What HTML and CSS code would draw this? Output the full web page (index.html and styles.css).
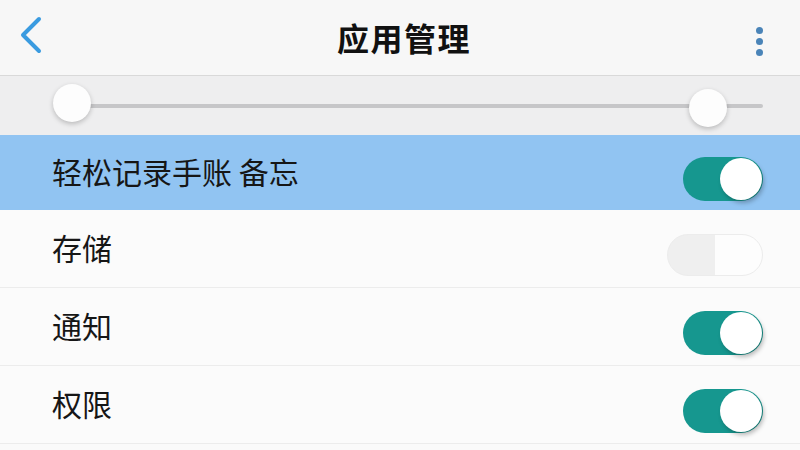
FILE: index.html
```html
<!DOCTYPE html>
<html lang="zh">
<head>
<meta charset="utf-8">
<link rel="stylesheet" href="styles.css">
</head>
<body>
<div class="app">
  <header class="topbar">
    <svg class="back" width="26" height="40" viewBox="0 0 26 40"><path d="M21 3 L5 19 L21 35" fill="none" stroke="#3a9be0" stroke-width="4" stroke-linecap="round" stroke-linejoin="round"/></svg>
    <h1 class="title">应用管理</h1>
    <div class="more"><span></span><span></span><span></span></div>
  </header>
  <div class="slider">
    <div class="track">
      <div class="thumb" style="left:0px"></div>
      <div class="thumb thumb-right" style="left:636px"></div>
    </div>
  </div>
  <ul class="list">
    <li class="row row-active"><span class="label">轻松记录手账 备忘</span><span class="toggle on"><span class="knob"></span></span></li>
    <li class="row"><span class="label">存储</span><span class="toggle off"></span></li>
    <li class="row"><span class="label">通知</span><span class="toggle on"><span class="knob"></span></span></li>
    <li class="row"><span class="label">权限</span><span class="toggle on"><span class="knob"></span></span></li>
  </ul>
</div>
</body>
</html>
```
FILE: styles.css
```css
* { box-sizing: border-box; margin: 0; padding: 0; }
html, body { width: 800px; height: 450px; overflow: hidden; background: #fafafa; }
body { font-family: "Noto Sans CJK SC", "Noto Sans", sans-serif; color: #1a1a1a; }
.app { display: flex; flex-direction: column; height: 450px; }
.topbar {
  height: 76px; display: flex; align-items: center;
  padding: 0 37px 0 18px; background: #f7f7f7; border-bottom: 1px solid #d9d9d9;
}
.back { display: block; margin-top: -3px; }
.title { flex: 1; text-align: center; font-size: 32px; font-weight: 700; letter-spacing: 1.5px; color: #111; margin-top: -2px; padding-left: 8px; }
.more { display: flex; flex-direction: column; gap: 4px; margin-top: 8px; }
.more span { width: 7px; height: 7px; border-radius: 50%; background: #4a84b8; }
.slider { height: 59px; background: #eeeeef; display: flex; align-items: center; padding: 0 37px 0 72px; }
.track { position: relative; flex: 1; height: 4px; background: #c6c6c8; border-radius: 2px; margin-top: 1px; }
.thumb {
  position: absolute; top: -20px; margin-left: -19px; width: 38px; height: 38px; border-radius: 50%;
  background: #fdfdfd; box-shadow: 0 2px 5px rgba(0,0,0,0.22);
}
.thumb-right { top: -15px; }
.list { list-style: none; flex: 1; }
.row {
  height: 78px; display: flex; align-items: center; justify-content: space-between;
  padding: 0 37px 0 52px; border-bottom: 1px solid #ececec; background: #fbfbfb;
}
.row-active { height: 75px; background: #91c4f2; border-bottom: none; }
.label { font-size: 30px; color: #161616; margin-top: -4px; }
.toggle { width: 80px; height: 44px; border-radius: 22px; display: flex; align-items: center; margin-top: 12px; }
.toggle.on { background: #16978f; justify-content: flex-end; padding-right: 1px; }
.knob { width: 42px; height: 42px; border-radius: 50%; background: #fff; box-shadow: 2px 3px 4px rgba(0,0,0,0.25); }
.toggle.off {
  width: 96px; height: 42px; border-radius: 21px;
  background: linear-gradient(to right, #efefef 50%, #fdfdfd 50%);
  border: 1px solid #ececec;
}
```
